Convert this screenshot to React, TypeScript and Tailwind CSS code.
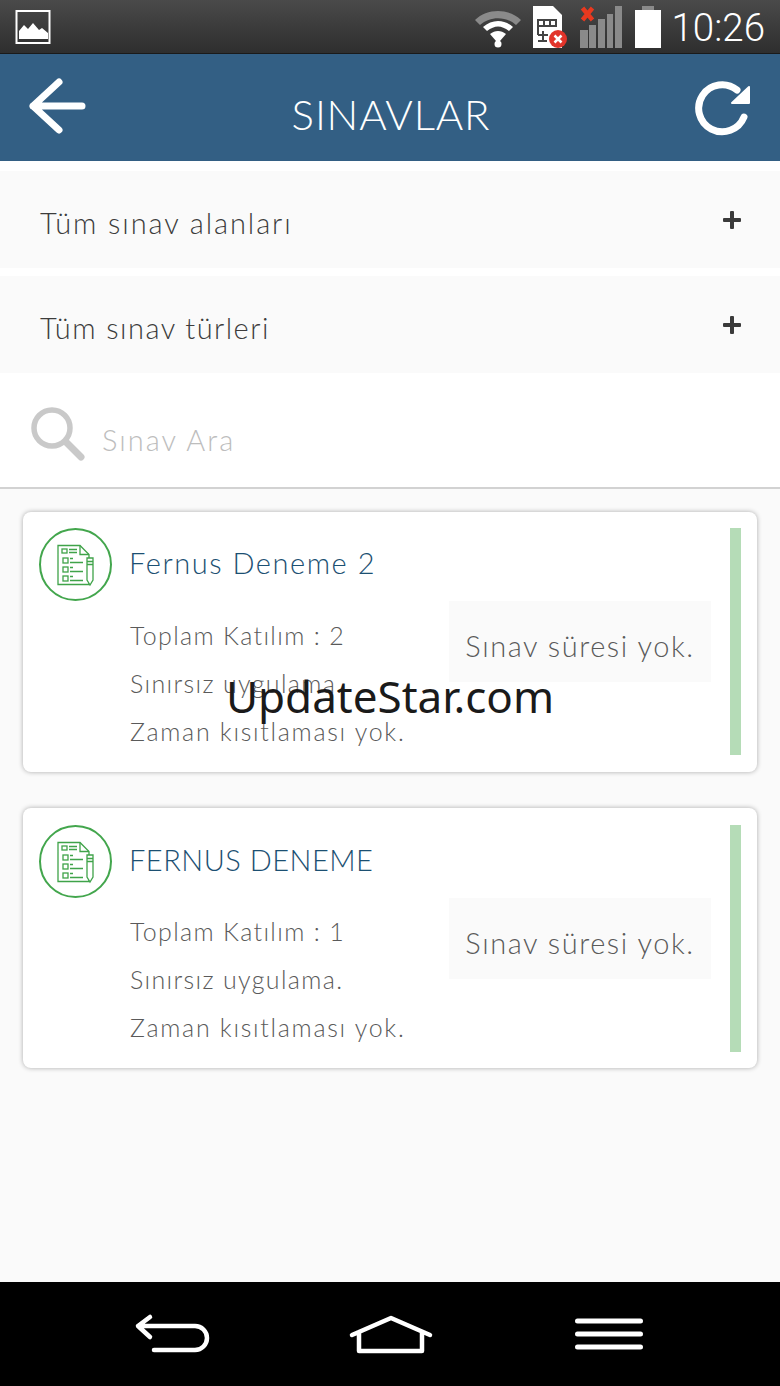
import React from "react";

const font = { fontFamily: "Lato, 'Noto Sans', sans-serif" };

function ExamIcon() {
  return (
    <div className="flex h-[73px] w-[73px] shrink-0 items-center justify-center rounded-full border-2 border-[#43a64d]">
      <svg width="40" height="44" viewBox="0 0 40 44" fill="none" stroke="#3fa349" strokeWidth="1.300">
        <path d="M2 2.500h22l9 9v30H2z" />
        <path d="M24 2.500v9h9" />
        <rect x="6" y="6" width="5" height="4" />
        <path d="M13 6.500h8M13 9.500h8" />
        <rect x="7" y="15" width="5" height="5" />
        <path d="M14 15.500h3M14 19.500h13" />
        <rect x="7" y="24" width="5" height="5" />
        <path d="M14 24.500h3M14 28.500h13" />
        <rect x="7" y="33" width="5" height="5" />
        <path d="M14 33.500h3M14 37.500h13" />
        <path d="M31 15h6v22l-3 5-3-5z" fill="#fff" />
        <path d="M31 18.500h6M31 21.500h6" />
      </svg>
    </div>
  );
}

function Card({ title, count, titleClass, topClass, bodyClass }: { title: string; count: number; titleClass: string; topClass: string; bodyClass: string }) {
  return (
    <div className={topClass}>
      <div className="flex min-w-0 flex-1 flex-col">
        <div className="flex h-[73px] items-center gap-[18px]">
          <ExamIcon />
          <div className={titleClass}>{title}</div>
        </div>
        <div className="flex">
          <div className={bodyClass}>
            <div>Toplam Katılım : {count}</div>
            <div>Sınırsız uygulama.</div>
            <div className="tracking-[1.7px]">Zaman kısıtlaması yok.</div>
          </div>
          <div className="flex h-[81px] w-[263px] items-center justify-center bg-[#fafafa] pt-[8px] text-[29px] font-light tracking-[1.55px] text-[#5a5a5a]">
            Sınav süresi yok.
          </div>
        </div>
      </div>
      <div className="ml-[19px] h-[227px] w-[11px] shrink-0 bg-[#b5dcb7]" />
    </div>
  );
}

function FilterRow({ label, textClass }: { label: string; textClass: string }) {
  return (
    <div className="flex h-[97px] items-center justify-between bg-[#fafafa] pl-[40px] pr-[38px]">
      <span className={textClass}>{label}</span>
      <svg width="20" height="20" viewBox="0 0 20 20" fill="#3a3a3a">
        <rect x="1" y="8" width="18" height="4" rx="1" />
        <rect x="8" y="1" width="4" height="18" rx="1" />
      </svg>
    </div>
  );
}

export default function App() {
  return (
    <div className="relative flex h-[1386px] w-[780px] flex-col overflow-hidden bg-[#fafafa]" style={font}>
      <div className="flex h-[54px] shrink-0 items-center justify-between border-b border-[#1a1a1a] bg-gradient-to-b from-[#4a4a4a] to-[#2e2e2e] pl-[15px] pr-[15px]">
        <svg width="36" height="36" viewBox="0 0 36 36">
          <rect x="1.500" y="2" width="33" height="32" fill="none" stroke="#fff" strokeWidth="2" />
          <path d="M4 30v-8l5-6 4 4 5-6 6 7 3-2 6 5v6z" fill="#fff" />
        </svg>
        <div className="flex items-center">
          <svg width="48" height="44" viewBox="0 0 48 44" className="mr-[10px]">
            <path d="M1 15C13 3 35 3 47 15l-5 5C32 11 16 11 6 20z" fill="#8a8a8a" />
            <path d="M9 22C18 14 30 14 39 22l-4 4C27 20 21 20 13 26z" fill="#fff" />
            <path d="M16 29c5-4 11-4 16 0l-6 7h-4z" fill="#fff" />
            <circle cx="24" cy="39" r="3.500" fill="#fff" />
          </svg>
          <svg width="36" height="44" viewBox="0 0 36 44">
            <path d="M1 1h20l9 9v33H1z" fill="#fff" />
            <path d="M6 15h18v6H6zM6 21v9M12 15v6M18 15v6M6 30h10M6 36h9M11 26v10" fill="none" stroke="#444" strokeWidth="2" />
            <circle cx="26" cy="34" r="9" fill="#e2342a" />
            <path d="M22.500 30.500l7 7M29.500 30.500l-7 7" stroke="#fff" strokeWidth="2.500" />
          </svg>
          <svg width="44" height="44" viewBox="0 0 44 44" className="ml-[12px] mr-[10px]">
            <rect x="0" y="25" width="8" height="18" fill="#8a8a8a" />
            <rect x="9" y="20" width="7" height="23" fill="#8a8a8a" />
            <rect x="18" y="14" width="7" height="29" fill="#8a8a8a" />
            <rect x="27" y="9" width="6" height="34" fill="#8a8a8a" />
            <rect x="35" y="1" width="7" height="42" fill="#8a8a8a" />
            <path d="M2.500 3l10 12M12.500 3l-10 12" stroke="#e8391f" strokeWidth="4.500" />
          </svg>
          <svg width="28" height="44" viewBox="0 0 28 44" className="mr-[9px]">
            <rect x="8" y="1" width="12" height="6" fill="#8a8a8a" />
            <rect x="1" y="5" width="26" height="38" fill="#fff" />
          </svg>
          <span
            className="mt-[4px] text-[38.500px] leading-none text-white"
            style={{ fontFamily: "Roboto, sans-serif", fontWeight: 300 }}
          >
            10:26
          </span>
        </div>
      </div>

      <div className="flex h-[107px] shrink-0 items-center justify-between bg-[#335f84] pl-[28px] pr-[28px]">
        <svg width="60" height="60" viewBox="0 0 60 60" fill="none" stroke="#fff" strokeWidth="7" strokeLinecap="round" strokeLinejoin="round" className="-mt-[3px]">
          <path d="M31 6L5 30l26 24M5 30h49" />
        </svg>
        <div className="mt-[14px] text-[42px] font-light tracking-[0.8px] text-white">SINAVLAR</div>
        <svg width="58" height="58" viewBox="0 0 58 58" fill="none">
          <path d="M50 38A23.500 23.500 0 1 1 43 11" stroke="#fff" strokeWidth="7" strokeLinecap="round" />
          <path d="M55 8v16H38z" fill="#fff" stroke="#fff" strokeWidth="2" strokeLinejoin="round" />
        </svg>
      </div>

      <div className="flex shrink-0 flex-col gap-[8px] bg-white pt-[10px]">
        <FilterRow label="Tüm sınav alanları" textClass="mt-[6px] text-[29px] font-light tracking-[1.9px] text-[#3c3c3c]" />
        <FilterRow label="Tüm sınav türleri" textClass="mt-[7px] text-[29px] font-light tracking-[1.45px] text-[#3c3c3c]" />
      </div>

      <div className="flex h-[116px] shrink-0 items-center gap-[18px] border-b-2 border-[#d2d2d2] bg-white pl-[30px]">
        <svg width="56" height="56" viewBox="0 0 56 56" fill="none" stroke="#c9c9c9" strokeLinecap="round" className="mt-[8px]">
          <circle cx="22" cy="22" r="18" strokeWidth="5.500" />
          <path d="M36 36l15 15" strokeWidth="7" />
        </svg>
        <span className="-ml-[2px] mt-[20px] text-[29px] font-light tracking-[2px] text-[#bdbdbd]">Sınav Ara</span>
      </div>

      <div className="flex flex-1 flex-col gap-[36px] pt-[23px]">
        <Card
          title="Fernus Deneme 2"
          count={2}
          topClass="mx-[23px] flex h-[260px] rounded-[8px] bg-white pl-[16px] pr-[16px] pt-[16px] shadow-[0_0_5px_rgba(0,0,0,0.32)]"
          bodyClass="ml-[91px] flex w-[320px] flex-col pt-[10px] text-[25px] font-light leading-[48px] tracking-[1.35px] text-[#5a5a5a]"
          titleClass="-ml-[1px] -mt-[4px] text-[29px] font-light tracking-[1.55px] text-[#1c5072]"
        />
        <Card
          title="FERNUS DENEME"
          count={1}
          topClass="mx-[23px] flex h-[260px] rounded-[8px] bg-white pl-[16px] pr-[16px] pt-[17px] shadow-[0_0_5px_rgba(0,0,0,0.32)]"
          bodyClass="ml-[91px] flex w-[320px] flex-col pt-[9px] text-[25px] font-light leading-[48px] tracking-[1.35px] text-[#5a5a5a]"
          titleClass="-ml-[1px] -mt-[4px] text-[29px] font-light tracking-[0.5px] text-[#1c5072]"
        />
      </div>

      <div className="flex h-[104px] shrink-0 items-center bg-black pl-[134px]">
        <svg width="78" height="42" viewBox="0 0 78 42" fill="none" stroke="#fff" strokeWidth="4.500" strokeLinecap="round" strokeLinejoin="round">
          <path d="M16 4L4 13l12 11M4 13h57a12 12 0 0 1 0 24H20" />
        </svg>
        <svg width="84" height="42" viewBox="0 0 84 42" fill="none" stroke="#fff" strokeWidth="4.500" strokeLinecap="round" strokeLinejoin="round" className="ml-[137px]">
          <path d="M3 22L42 5l39 17M10 19v19h63V19" />
        </svg>
        <svg width="70" height="34" viewBox="0 0 70 34" fill="none" stroke="#fff" strokeWidth="5" strokeLinecap="round" className="ml-[140px]">
          <path d="M4.500 4h63M4.500 17h63M4.500 30h63" />
        </svg>
      </div>

      <div
        className="absolute left-0 right-0 top-[670px] text-center text-[44px] leading-[52px] text-[#1a1a1a]"
        style={{ fontFamily: "'Noto Sans', sans-serif" }}
      >
        UpdateStar.com
      </div>
    </div>
  );
}
